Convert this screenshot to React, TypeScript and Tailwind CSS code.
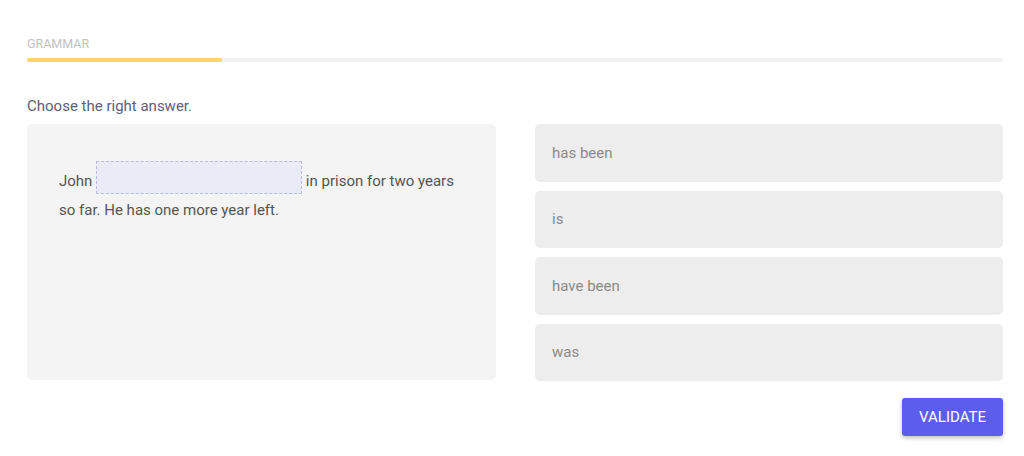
export default function App() {
  const options = ["has been", "is", "have been", "was"];
  return (
    <div className="min-h-screen bg-white px-[27px] pt-[37px] font-['Roboto',sans-serif] w-[1024px]">
      <div className="w-[976px]">
        <div className="text-[12.5px] leading-[14px] text-[#c2c2c2]">GRAMMAR</div>
        <div className="mt-[7px] h-[4px] w-full rounded-full bg-[#f2f2f2]">
          <div className="h-[4px] w-[195px] rounded-full bg-[#ffd36c]" />
        </div>
        <div className="mt-[35px] text-[15px] leading-[18px] text-[#5c5f7c]">Choose the right answer.</div>
        <div className="mt-[9px] grid grid-cols-[469px_468px] gap-[39px]">
          <div className="h-[256px] rounded-[5px] bg-[#f4f4f4] px-[32px] pt-[37px] text-[15px] leading-[29px] text-[#555555]">
            <p>
              John{" "}
              <span className="inline-block h-[33px] w-[206px] align-[-8px] border border-dashed border-[#b9bce0] bg-[#e9ebf7]" />{" "}
              in prison for two years so far. He has one more year left.
            </p>
          </div>
          <div className="flex flex-col gap-[9px]">
            {options.map((o) => (
              <div
                key={o}
                className="flex h-[57.5px] items-center rounded-[5px] bg-[#ededed] px-[17px] text-[15px] text-[#8a8a8a]"
              >
                {o}
              </div>
            ))}
          </div>
        </div>
        <div className="mt-[17px] flex justify-end">
          <button className="h-[38px] w-[101px] rounded-[3px] bg-[#5d5ded] text-[15px] text-white shadow-[0_2px_4px_rgba(0,0,0,0.25)]">
            VALIDATE
          </button>
        </div>
      </div>
    </div>
  );
}
